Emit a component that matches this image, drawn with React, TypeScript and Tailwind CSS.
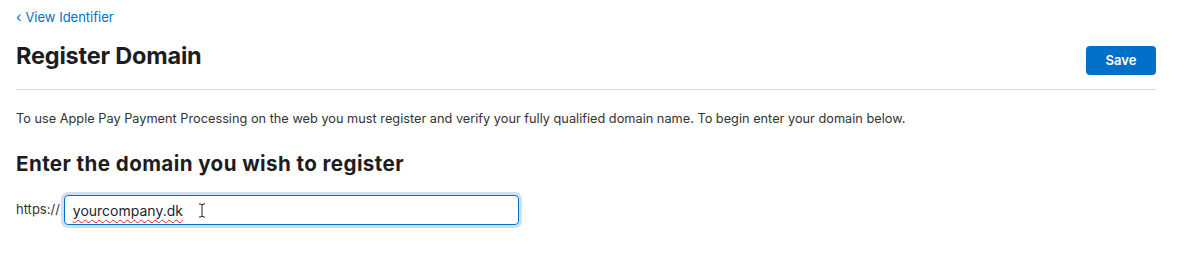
export default function App() {
  return (
    <div className="min-h-[263px] bg-white px-4 font-['Inter',sans-serif] text-[#1d1d1f]">
      <div className="w-[1140px]">
        <a href="#" className="flex items-center gap-1 pt-[9px] text-[13px] leading-4 text-[#0070c9]">
          <span className="text-[14px] leading-4">‹</span>
          <span>View Identifier</span>
        </a>

        <div className="mt-[7px] flex items-start justify-between border-b border-[#d6d6d6] pb-[14px]">
          <h1 className="pt-[10px] text-[23.5px] font-bold leading-7 tracking-[-0.2px]">Register Domain</h1>
          <button className="mt-[14px] h-[29px] w-[70px] rounded-[4px] bg-[#0070c9] text-[13px] font-semibold text-white">
            Save
          </button>
        </div>

        <p className="mt-[19px] text-[12.75px] leading-5 text-[#333]">
          To use Apple Pay Payment Processing on the web you must register and verify your fully qualified domain name. To begin enter your domain below.
        </p>

        <h2 className="mt-[21px] text-[20.6px] font-bold leading-7 tracking-[0.4px]">Enter the domain you wish to register</h2>

        <div className="mt-[17px] flex items-center gap-[4px]">
          <span className="text-[13px] text-[#333]">https://</span>
          <div className="flex h-[30px] w-[455px] items-center rounded-[4px] border border-[#0070c9] px-2 ring-[3px] ring-[#cde0f4]">
            <span className="text-[14px] text-[#1d1d1f] underline decoration-[#e02020] decoration-wavy decoration-1 underline-offset-[3px]">
              yourcompany.dk
            </span>
            <svg className="ml-[15px]" width="8" height="15" viewBox="0 0 8 15">
              <path d="M1 1h2l1 1 1-1h2M4 2v11M1 14h2l1-1 1 1h2" stroke="#222" strokeWidth="1" fill="none" />
            </svg>
          </div>
        </div>
      </div>
    </div>
  );
}
